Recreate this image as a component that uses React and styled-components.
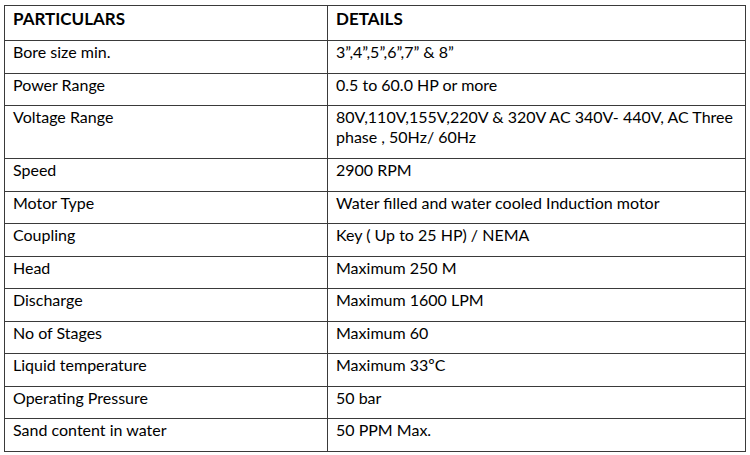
import React from "react";
import styled, { createGlobalStyle } from "styled-components";

const GlobalStyle = createGlobalStyle`
	html, body {
		margin: 0;
		padding: 0;
		background: #ffffff;
	}
	body {
		font-family: Lato, "Open Sans", "Liberation Sans", sans-serif;
		color: #000000;
	}
`;

const Page = styled.div`
	width: 750px;
	height: 455px;
	padding: 5px 0 0 4px;
	box-sizing: border-box;
`;

const SpecTable = styled.table`
	width: 742px;
	border-collapse: collapse;
	table-layout: fixed;
	border: 1.5px solid #3a3a3a;
`;

const Row = styled.tr`
	height: ${(props) => props.$height || 32.5}px;
`;

const Cell = styled.td`
	border: 1px solid #3a3a3a;
	vertical-align: top;
	padding: ${(props) => (props.$head ? "3px" : "1px")} 2px 0 8px;
	font-size: ${(props) => (props.$head ? "17px" : "16px")};
	font-weight: ${(props) => (props.$head ? 700 : 400)};
	line-height: 20px;
	color: #000000;
`;

const rows = [
	["Bore size min.", "3\u201d,4\u201d,5\u201d,6\u201d,7\u201d & 8\u201d"],
	["Power Range", "0.5 to 60.0 HP or more"],
	[
		"Voltage Range",
		"80V,110V,155V,220V & 320V AC 340V- 440V, AC Three phase , 50Hz/ 60Hz",
		53,
	],
	["Speed", "2900 RPM"],
	["Motor Type", "Water filled and water cooled Induction motor"],
	["Coupling", "Key ( Up to 25 HP) / NEMA"],
	["Head", "Maximum 250 M"],
	["Discharge", "Maximum 1600 LPM"],
	["No of Stages", "Maximum 60"],
	["Liquid temperature", "Maximum 33\u00baC"],
	["Operating Pressure", "50 bar"],
	["Sand content in water", "50 PPM Max."],
];

export default function App() {
	return (
		<>
			<GlobalStyle />
			<Page>
				<SpecTable>
					<colgroup>
						<col style={{ width: "323px" }} />
						<col />
					</colgroup>
					<tbody>
						<Row $height={35}>
							<Cell $head>PARTICULARS</Cell>
							<Cell $head>DETAILS</Cell>
						</Row>
						{rows.map(([label, value, h]) => (
							<Row key={label} $height={h}>
								<Cell>{label}</Cell>
								<Cell>{value}</Cell>
							</Row>
						))}
					</tbody>
				</SpecTable>
			</Page>
		</>
	);
}
